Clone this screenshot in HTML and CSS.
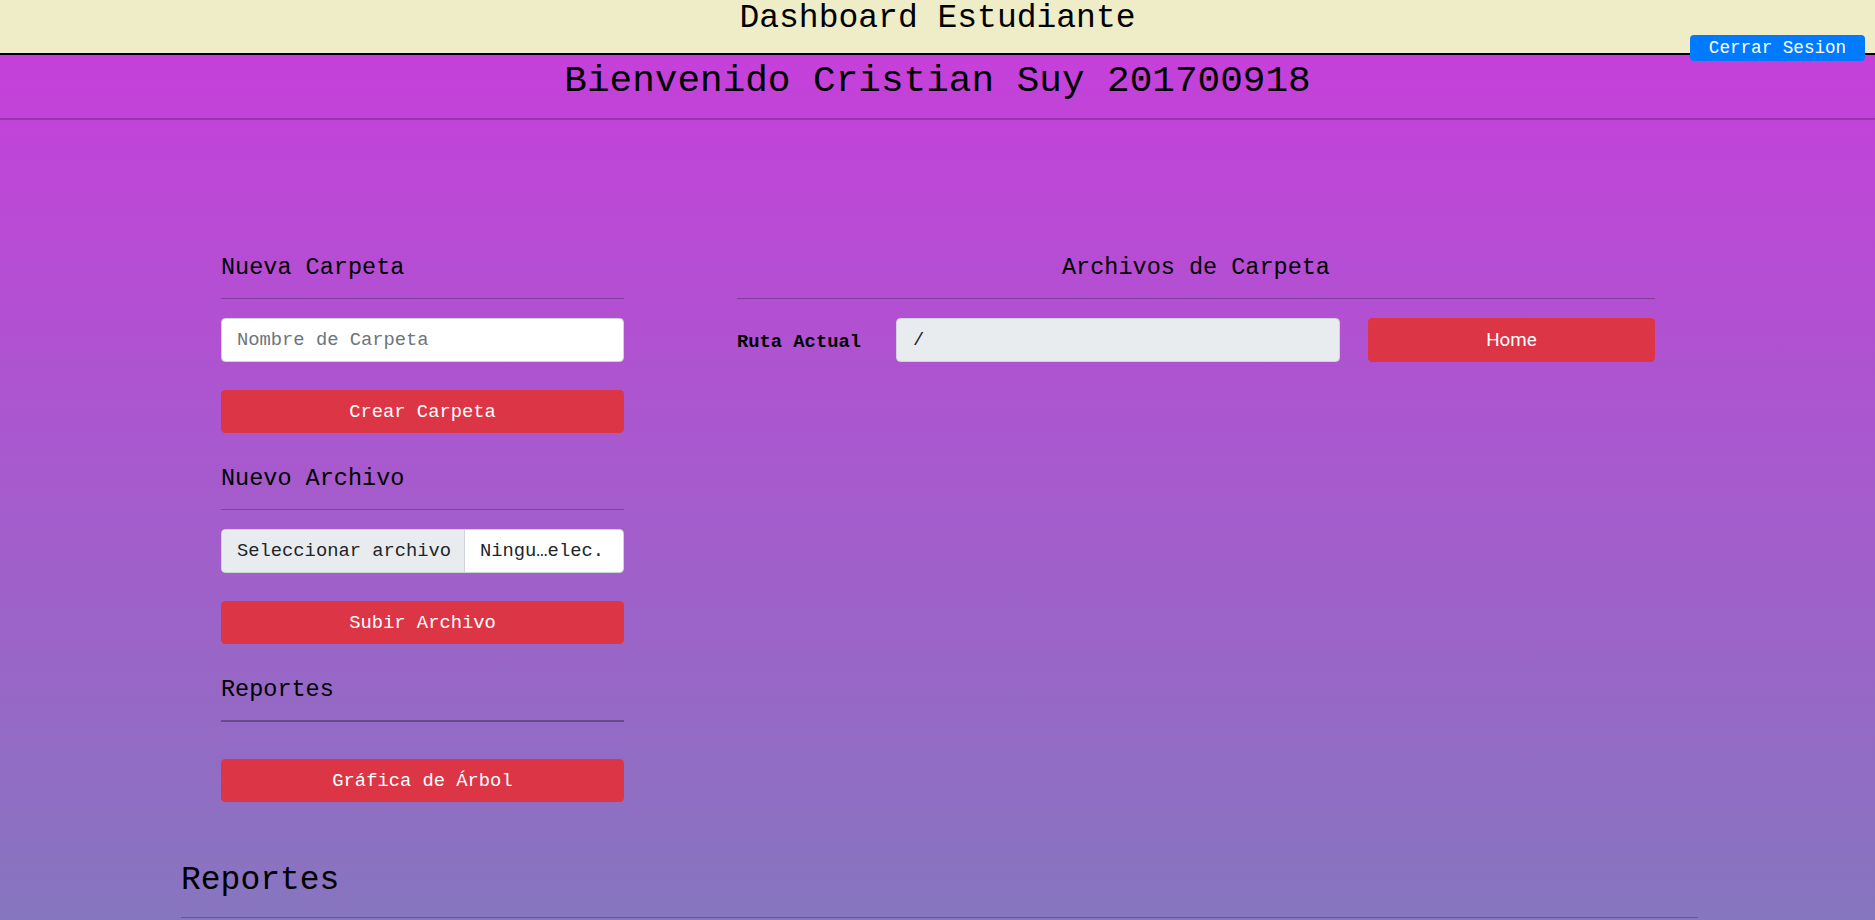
FILE: index.html
```html
<!DOCTYPE html>
<html lang="es">
<head>
<meta charset="utf-8">
<title>Dashboard Estudiante</title>
<link rel="stylesheet" href="styles.css">
</head>
<body>
<header class="topbar">
  <h1 class="topbar-title">Dashboard Estudiante</h1>
  <button class="logout">Cerrar Sesion</button>
</header>
<div class="page">
  <section class="welcome">
    <h1 class="welcome-title">Bienvenido Cristian Suy 201700918</h1>
  </section>
  <main class="container">
    <div class="row">
      <div class="col-left">
        <h5 class="sec-title">Nueva Carpeta</h5>
        <hr class="sep">
        <input class="field" type="text" placeholder="Nombre de Carpeta">
        <button class="btn-red">Crear Carpeta</button>

        <h5 class="sec-title spaced">Nuevo Archivo</h5>
        <hr class="sep">
        <div class="file-field">
          <span class="file-btn">Seleccionar archivo</span>
          <span class="file-name">Ningu…elec.</span>
        </div>
        <button class="btn-red">Subir Archivo</button>

        <h5 class="sec-title spaced">Reportes</h5>
        <hr class="sep sep-strong">
        <button class="btn-red">Gráfica de Árbol</button>
      </div>
      <div class="col-right">
        <h5 class="sec-title center">Archivos de Carpeta</h5>
        <hr class="sep">
        <div class="path-row">
          <label class="path-label">Ruta Actual</label>
          <input class="field path-input" type="text" value="/" readonly>
          <button class="btn-home">Home</button>
        </div>
      </div>
    </div>
    <h2 class="reports-title">Reportes</h2>
    <hr class="wide">
  </main>
</div>
</body>
</html>
```

FILE: styles.css
```css
* { box-sizing: border-box; }

html, body {
  margin: 0;
  padding: 0;
}

body {
  font-family: "Liberation Mono", "DejaVu Sans Mono", monospace;
  color: #111;
  background: #8676bf;
  overflow: hidden;
  height: 920px;
}

.topbar {
  position: relative;
  height: 55px;
  background: #efecc8;
  border-bottom: 2px solid #000;
  text-align: center;
}

.topbar-title {
  margin: 0;
  font-size: 33px;
  line-height: 38px;
  font-weight: 400;
  color: #000;
}

.logout {
  position: absolute;
  top: 35px;
  right: 10px;
  width: 175px;
  height: 26px;
  padding: 0;
  border: 0;
  border-radius: 4px;
  background: #007bff;
  color: #fff;
  font-family: "Liberation Mono", "DejaVu Sans Mono", monospace;
  font-size: 17.6px;
  line-height: 26px;
  z-index: 2;
}

.page {
  height: 865px;
  background: linear-gradient(to bottom, #c540da 0%, #8676bf 100%);
}

.welcome {
  padding: 4px 0 14px;
  border-bottom: 2px solid rgba(0, 0, 0, 0.2);
  text-align: center;
}

.welcome-title {
  margin: 0;
  font-size: 37.7px;
  line-height: 45px;
  font-weight: 400;
  color: #000;
}

.container {
  width: 1517px;
  margin-left: 181px;
  padding-top: 134px;
}

.row {
  display: flex;
  gap: 113px;
  padding-left: 40px;
}

.col-left {
  width: 403px;
  display: flex;
  flex-direction: column;
}

.col-right {
  width: 918px;
}

.sec-title {
  margin: 0;
  font-size: 23.5px;
  line-height: 28px;
  font-weight: 400;
  color: #000;
}

.sec-title.spaced { margin-top: 32px; }
.sec-title.center { text-align: center; }

.sep {
  margin: 16px 0 19px;
  border: 0;
  border-top: 1px solid rgba(0, 0, 0, 0.25);
  height: 0;
}

.sep-strong {
  border-top: 2px solid rgba(0, 0, 0, 0.3);
  margin-bottom: 37px;
}

.field {
  display: block;
  width: 100%;
  height: 44px;
  padding: 0 15px;
  border: 1px solid #ced4da;
  border-radius: 4.5px;
  background: #fff;
  font-family: "Liberation Mono", "DejaVu Sans Mono", monospace;
  font-size: 18.8px;
  color: #212529;
  outline: none;
}

.field::placeholder { color: #6c757d; }

.btn-red {
  display: block;
  width: 100%;
  height: 43px;
  margin-top: 28px;
  padding: 0;
  border: 0;
  border-radius: 4.5px;
  background: #dc3545;
  color: #fff;
  font-family: "Liberation Mono", "DejaVu Sans Mono", monospace;
  font-size: 18.8px;
}

.sep-strong + .btn-red { margin-top: 0; }

.file-field {
  display: flex;
  height: 44px;
  border: 1px solid #ced4da;
  border-radius: 4.5px;
  background: #fff;
  overflow: hidden;
  font-size: 18.8px;
  color: #212529;
}

.file-btn {
  display: flex;
  align-items: center;
  width: 243px;
  padding-left: 15px;
  background: #e9ecef;
  border-right: 1px solid #ced4da;
  white-space: nowrap;
}

.file-name {
  display: flex;
  align-items: center;
  padding-left: 15px;
  white-space: nowrap;
}

.path-row {
  display: flex;
  align-items: center;
  height: 44px;
}

.path-label {
  width: 159px;
  font-size: 18.8px;
  font-weight: 700;
  color: #000;
  padding-top: 4px;
}

.path-input {
  width: 444px;
  background: #e9ecef;
  padding-left: 16px;
}

.btn-home {
  width: 287px;
  height: 44px;
  margin-left: 28px;
  border: 0;
  border-radius: 4.5px;
  background: #dc3545;
  color: #fff;
  font-family: Roboto, "Liberation Sans", sans-serif;
  font-size: 18.8px;
}

.reports-title {
  margin: 59px 0 0;
  font-size: 33px;
  line-height: 40px;
  font-weight: 400;
  color: #000;
}

.wide {
  margin: 16px 0 0;
  border: 0;
  border-top: 1px solid rgba(0, 0, 0, 0.25);
  height: 0;
}
```
